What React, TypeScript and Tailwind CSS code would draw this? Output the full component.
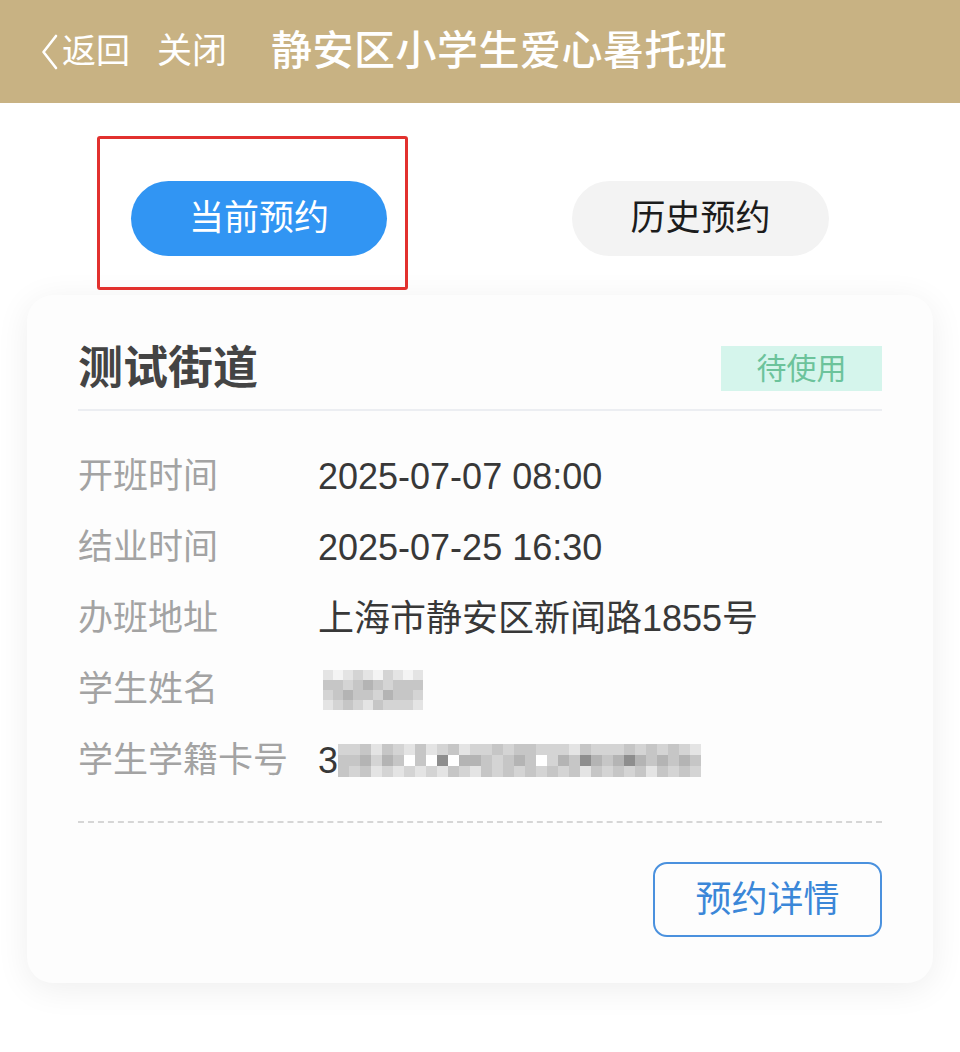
const SHADES = [
  'bg-[#f4f4f4]',
  'bg-[#e4e4e4]',
  'bg-[#d4d4d4]',
  'bg-[#c6c6c6]',
  'bg-[#b4b4b4]',
  'bg-[#8e8e8e]',
  'bg-white',
]

const NAME_BLUR = ['1012102101', '3323432333', '2343324332', '1232132221']
const ID_BLUR = [
  '223132131231223233222132223232321',
  '334243636564432343624354345434343',
  '323121212132132323232313232313232',
]

function Mosaic({ rows, cell }: { rows: string[]; cell: string }) {
  return (
    <div className="flex flex-col">
      {rows.map((r, i) => (
        <div key={i} className="flex">
          {r.split('').map((c, j) => (
            <div key={j} className={`${cell} ${SHADES[Number(c)]}`} />
          ))}
        </div>
      ))}
    </div>
  )
}

function InfoRow({ label, children }: { label: string; children: React.ReactNode }) {
  return (
    <div className="flex h-[71px] items-center">
      <span className="w-[240px] shrink-0 text-[35px] text-[#a3a3a3]">{label}</span>
      <div className="flex items-center text-[36px] text-[#383838]">{children}</div>
    </div>
  )
}

export default function App() {
  return (
    <div className="min-h-[1052px] bg-white font-[Liberation_Sans,Noto_Sans_CJK_SC,sans-serif]">
      {/* top bar */}
      <div className="flex h-[103px] items-center bg-[#c8b283] pl-[41px] text-white">
        <svg width="18" height="36" viewBox="0 0 18 36" fill="none" className="mr-[3px]">
          <path d="M15 2 L2.5 18 L15 34" stroke="currentColor" strokeWidth="2.6" strokeLinecap="round" strokeLinejoin="round" />
        </svg>
        <span className="text-[34px]">返回</span>
        <span className="ml-[27px] text-[35px]">关闭</span>
        <h1 className="ml-[44px] text-[41px] font-medium tracking-[0.5px]">静安区小学生爱心暑托班</h1>
      </div>

      {/* tabs */}
      <div className="flex items-center pl-[131px] pt-[78px]">
        <div className="relative">
          <button className="flex h-[75px] w-[256px] items-center justify-center rounded-full bg-[#3195f3] text-[35px] text-white">
            当前预约
          </button>
          <div className="pointer-events-none absolute -left-[34px] -top-[45px] -right-[21px] -bottom-[34px] rounded-[3px] border-[3px] border-[#e2312e]" />
        </div>
        <button className="ml-[185px] flex h-[75px] w-[257px] items-center justify-center rounded-full bg-[#f3f3f3] text-[35px] text-[#1c1c1c]">
          历史预约
        </button>
      </div>

      {/* booking card */}
      <div className="mx-[27px] mt-[39px] rounded-[26px] bg-[#fdfdfd] px-[51px] pb-[46px] pt-[51px] shadow-[0_6px_34px_rgba(0,0,0,0.07)]">
        <div className="flex items-start justify-between border-b-2 border-[#eceef2] pb-[18px]">
          <h2 className="h-[45px] text-[45px] font-bold leading-[45px] text-[#444444]">测试街道</h2>
          <span className="flex h-[45px] w-[161px] items-center justify-center bg-[#d5f5ec] text-[30px] text-[#6cc39b]">
            待使用
          </span>
        </div>

        <div className="pt-[30px] pb-[25px]">
          <InfoRow label="开班时间">2025-07-07 08:00</InfoRow>
          <InfoRow label="结业时间">2025-07-25 16:30</InfoRow>
          <InfoRow label="办班地址">上海市静安区新闻路1855号</InfoRow>
          <InfoRow label="学生姓名">
            <div className="ml-[5px]">
              <Mosaic rows={NAME_BLUR} cell="h-[10px] w-[10px]" />
            </div>
          </InfoRow>
          <InfoRow label="学生学籍卡号">
            <span>3</span>
            <div className="ml-[0px]">
              <Mosaic rows={ID_BLUR} cell="h-[11px] w-[11px]" />
            </div>
          </InfoRow>
        </div>

        <div className="border-t-2 border-dashed border-[#d6d6d6]" />

        <div className="flex justify-end pt-[39px]">
          <button className="flex h-[75px] w-[229px] items-center justify-center rounded-[14px] border-2 border-[#4a91de] text-[36px] text-[#3b87d8]">
            预约详情
          </button>
        </div>
      </div>
    </div>
  )
}
